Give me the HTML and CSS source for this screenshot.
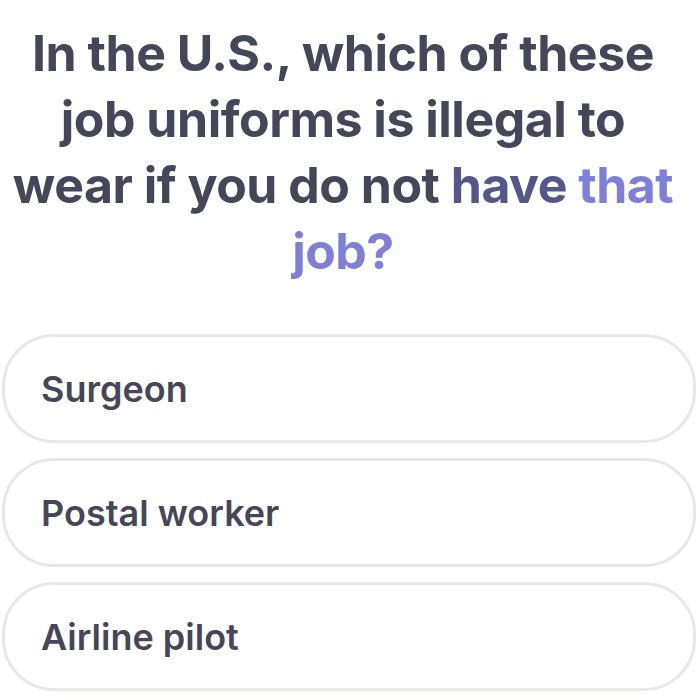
FILE: index.html
```html
<!DOCTYPE html>
<html>
<head>
<meta charset="utf-8">
<link rel="stylesheet" href="styles.css">
</head>
<body>
<div class="page">
  <h1 class="question">In the U.S., which of these job uniforms is illegal to wear if you do not <span class="mid">have</span> <span class="light">that job?</span></h1>
  <div class="options">
    <div class="option">Surgeon</div>
    <div class="option">Postal worker</div>
    <div class="option">Airline pilot</div>
  </div>
</div>
</body>
</html>
```
FILE: styles.css
```css
html, body {
  margin: 0;
  padding: 0;
  background: #ffffff;
}
.page {
  width: 700px;
  height: 700px;
  overflow: hidden;
  font-family: "Inter", "Noto Sans", sans-serif;
  color: #46465a;
}
.question {
  margin: 0;
  padding: 20px 24px 0 10px;
  text-align: center;
  font-size: 50px;
  line-height: 66px;
  font-weight: 700;
  letter-spacing: -0.5px;
}
.mid { color: #54578a; }
.light { color: #7c80d8; }
.options {
  display: flex;
  flex-direction: column;
  gap: 15px;
  padding: 0 4px 0 2px;
  margin-top: 50px;
}
.option {
  height: 103px;
  border: 3px solid #e7e7eb;
  border-radius: 52px;
  display: flex;
  align-items: center;
  padding-left: 36px;
  font-size: 36px;
  font-weight: 600;
  color: #46465a;
}
```
